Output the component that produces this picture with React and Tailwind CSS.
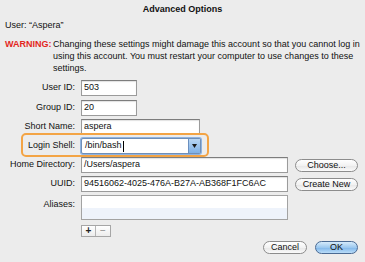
import React from "react";

function Field({ w, value, children }) {
  return (
    <div
      className={`h-[16px] ${w} bg-white border border-[#9b9b9b] border-t-[#7d7d7d] shadow-[inset_0_1px_1px_rgba(0,0,0,0.12)] flex items-center px-[2px] text-[9px] text-[#111] whitespace-nowrap overflow-hidden`}
    >
      {value}
      {children}
    </div>
  );
}

function PillButton({ w, children, primary }) {
  return (
    <div
      className={`${w} h-[13px] rounded-full border flex items-center justify-center text-[9px] leading-none whitespace-nowrap ${
        primary
          ? "border-[#4a6a93] bg-[linear-gradient(#d6ebfb,#9cc8ef_50%,#7fb6ea_51%,#b9dcf8)] text-[#111]"
          : "border-[#8c8c8c] bg-[linear-gradient(#ffffff,#f2f2f2_50%,#e6e6e6_51%,#fafafa)] text-[#111]"
      }`}
    >
      {children}
    </div>
  );
}

function Row({ label, children, className = "" }) {
  return (
    <div className={`flex items-center ${className}`}>
      <div className="w-[76px] pr-[1px] text-right text-[9px] text-[#111] whitespace-nowrap">{label}</div>
      <div className="ml-[5px] flex items-center">{children}</div>
    </div>
  );
}

export default function App() {
  return (
    <div className="w-[365px] h-[262px] bg-[#ececec] font-['Liberation_Sans',Arial,sans-serif] text-[9px] text-[#111] overflow-hidden flex flex-col">
      <div className="h-[20px] pt-[4px] text-center font-bold leading-[11px]">Advanced Options</div>
      <div className="pl-[5px] leading-[11px] mt-[0px]">User: “Aspera”</div>
      <div className="flex pl-[5px] mt-[7px] leading-[12px] whitespace-nowrap">
        <div className="w-[48px] text-[#e3261d] font-bold">WARNING:</div>
        <div>
          Changing these settings might damage this account so that you cannot log in
          <br />
          using this account. You must restart your computer to use changes to these
          <br />
          settings.
        </div>
      </div>

      <div className="mt-[6px] flex flex-col gap-[3px]">
        <Row label="User ID:">
          <Field w="w-[56px]" value="503" />
        </Row>
        <Row label="Group ID:" className="mt-[1px]">
          <Field w="w-[56px]" value="20" />
        </Row>
        <Row label="Short Name:">
          <Field w="w-[119px]" value="aspera" />
        </Row>
        <div className="relative">
          <div className="absolute left-[21px] top-[-5px] w-[188px] h-[24px] border-2 border-[#f3a445] rounded-[5px]" />
          <div className="relative">
            <Row label="Login Shell:">
              <div className="relative w-[120px] h-[16px] bg-white border border-[#6f8fb8] rounded-[2px] shadow-[0_0_0_1px_#8fb3e0] flex items-center">
                <span className="px-[3px] text-[9px]">/bin/bash</span>
                <span className="w-[1px] h-[11px] bg-black -ml-[2px]" />
                <div className="absolute right-0 top-0 bottom-0 w-[12px] bg-[linear-gradient(#b9d6f3,#7eb0e6)] border-l border-[#6a8fbf] flex items-center justify-center">
                  <svg width="5" height="4" viewBox="0 0 5 4">
                    <path d="M0 0H5L2.5 4Z" fill="#1a1a1a" />
                  </svg>
                </div>
              </div>
            </Row>
          </div>
        </div>
        <div className="flex items-center">
          <Row label="Home Directory:">
            <Field w="w-[207px]" value="/Users/aspera" />
          </Row>
          <div className="ml-[7px]">
            <PillButton w="w-[63px]">Choose...</PillButton>
          </div>
        </div>
        <div className="flex items-center">
          <Row label="UUID:">
            <Field w="w-[207px]" value="94516062-4025-476A-B27A-AB368F1FC6AC" />
          </Row>
          <div className="ml-[7px]">
            <PillButton w="w-[63px]">Create New</PillButton>
          </div>
        </div>
        <div className="flex items-start">
          <div className="w-[76px] pr-[1px] pt-[3px] text-right whitespace-nowrap">Aliases:</div>
          <div className="ml-[5px] w-[207px] h-[25px] border border-[#a3a3a3] bg-white flex flex-col">
            <div className="h-[12px] bg-white" />
            <div className="h-[12px] bg-[#eef3fb]" />
          </div>
        </div>
      </div>

      <div className="ml-[81px] mt-[5px] flex w-[30px] h-[12px] border border-[#a6a6a6] bg-[linear-gradient(#ffffff,#ececec)]">
        <div className="w-[15px] flex items-center justify-center border-r border-[#b5b5b5] text-[10px] leading-none font-bold text-[#222]">+</div>
        <div className="w-[15px] flex items-center justify-center text-[10px] leading-none text-[#888]">−</div>
      </div>

      <div className="flex justify-end pr-[7px] mt-[4px] gap-[8px]">
        <PillButton w="w-[44px]">Cancel</PillButton>
        <PillButton w="w-[43px]" primary>
          OK
        </PillButton>
      </div>
    </div>
  );
}
